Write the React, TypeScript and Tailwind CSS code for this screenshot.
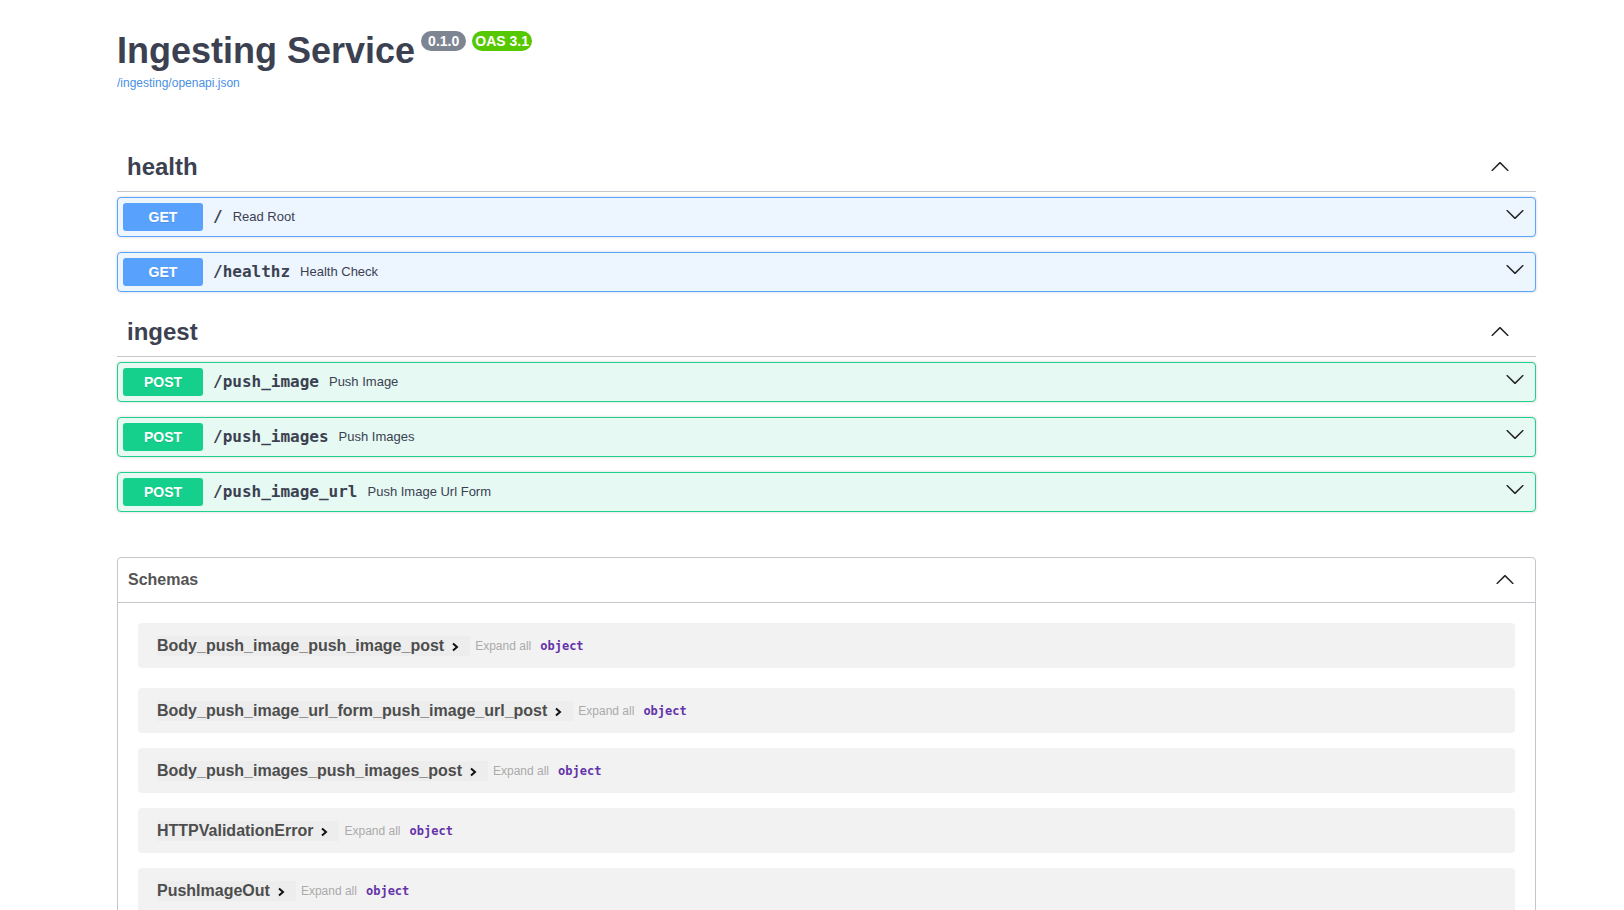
import React from 'react';

type Op = {
  method: 'GET' | 'POST';
  path: string;
  summary: string;
};

const healthOps: Op[] = [
  { method: 'GET', path: '/', summary: 'Read Root' },
  { method: 'GET', path: '/healthz', summary: 'Health Check' },
];

const ingestOps: Op[] = [
  { method: 'POST', path: '/push_image', summary: 'Push Image' },
  { method: 'POST', path: '/push_images', summary: 'Push Images' },
  { method: 'POST', path: '/push_image_url', summary: 'Push Image Url Form' },
];

const schemas = [
  'Body_push_image_push_image_post',
  'Body_push_image_url_form_push_image_url_post',
  'Body_push_images_push_images_post',
  'HTTPValidationError',
  'PushImageOut',
  'ValidationError',
];

function Arrow({ up = false, className = '' }: { up?: boolean; className?: string }) {
  return (
    <svg
      viewBox="0 0 20 20"
      width={20}
      height={20}
      fill="currentColor"
      className={(up ? 'rotate-180 ' : '') + className}
    >
      <path d="M17.418 6.109c.272-.268.709-.268.979 0s.271.701 0 .969l-7.908 7.83c-.27.268-.707.268-.979 0l-7.908-7.83c-.27-.268-.27-.701 0-.969.271-.268.709-.268.979 0L10 13.25l7.418-7.141z" />
    </svg>
  );
}

function OpBlock({ op }: { op: Op }) {
  const get = op.method === 'GET';
  return (
    <div
      className={
        get
          ? 'mb-[15px] rounded-[4px] border border-[#5aa5fd] bg-[#edf5ff] shadow-[0_0_3px_rgba(0,0,0,0.19)]'
          : 'mb-[15px] rounded-[4px] border border-[#22d08e] bg-[#e6f9f2] shadow-[0_0_3px_rgba(0,0,0,0.19)]'
      }
    >
      <div className="flex items-center p-[5px]">
        <span
          className={
            (get ? 'bg-[#58a2fd]' : 'bg-[#14d08c]') +
            ' w-[80px] rounded-[3px] py-[6px] text-center text-[14px] font-bold leading-4 text-white [text-shadow:0_1px_0_rgba(0,0,0,0.1)]'
          }
        >
          {op.method}
        </span>
        <span className="px-[10px] font-['DejaVu_Sans_Mono',monospace] text-[16px] font-bold leading-5 text-[#3b4151]">
          {op.path}
        </span>
        <span className="flex-1 text-[13px] leading-4 text-[#3b4151]">{op.summary}</span>
        <span className="mb-[6px] pl-[10px] pr-[5px] text-[#222]">
          <Arrow />
        </span>
      </div>
    </div>
  );
}

function TagSection({ name, ops }: { name: string; ops: Op[] }) {
  return (
    <div>
      <h3 className="mb-[5px] flex items-center border-b border-[#c4c6cb] py-[10px] pl-[10px] pr-[26px] text-[24px] font-bold leading-[29px] text-[#3b4151]">
        <span className="flex-1">{name}</span>
        <Arrow up className="text-[#222]" />
      </h3>
      {ops.map((op) => (
        <OpBlock key={op.path} op={op} />
      ))}
    </div>
  );
}

function SchemaRow({ name, first }: { name: string; first: boolean }) {
  return (
    <div
      className={
        (first ? 'mb-[20px]' : 'mb-[15px]') +
        ' flex h-[45px] items-center rounded-[4px] bg-[#f2f2f2] pl-[19px]'
      }
    >
      <span className="flex h-5 items-center bg-[#ededed] pr-[11px]">
        <span className="text-[16px] font-bold leading-5 text-[#4d4d4d]">{name}</span>
        <svg viewBox="0 0 8 10" width={8} height={10} className="ml-[7px] mt-[3px]">
          <path d="M2 1.5 L6 5 L2 8.5" fill="none" stroke="#111" strokeWidth={2} />
        </svg>
      </span>
      <span className="ml-[5px] text-[12px] leading-4 text-[#aaaaaa]">Expand all</span>
      <span className="ml-[9px] font-['DejaVu_Sans_Mono',monospace] text-[12px] font-bold leading-4 text-[#6432aa]">
        object
      </span>
    </div>
  );
}

export default function App() {
  return (
    <div className="min-h-screen bg-white pb-10 pl-[117px] pr-[88px] pt-[30px] font-['Liberation_Sans',Arial,sans-serif]">
      {/* Info */}
      <div className="flex items-start">
        <h2 className="text-[36px] font-bold leading-[41px] text-[#3b4151]">Ingesting Service</h2>
        <span className="ml-[6px] mt-[1px] rounded-full bg-[#7d8492] px-[7px] py-[2px] text-[14px] font-bold leading-4 text-white">
          0.1.0
        </span>
        <span className="ml-[6px] mt-[1px] rounded-full bg-[#55c800] px-[3px] py-[2px] text-[14px] font-bold leading-4 text-white">
          OAS 3.1
        </span>
      </div>
      <div className="mt-[5px] text-[12px] leading-[14px] text-[#4990e2]">/ingesting/openapi.json</div>

      {/* Operations */}
      <div className="mt-[52px]">
        <TagSection name="health" ops={healthOps} />
        <TagSection name="ingest" ops={ingestOps} />
      </div>

      {/* Schemas */}
      <section className="mt-[45px] rounded-[4px] border border-[#c4c6cb]">
        <h4 className="flex items-center border-b border-[#c4c6cb] py-[10px] pl-[10px] pr-[20px] text-[16px] font-bold leading-6 text-[#555]">
          <span className="flex-1">Schemas</span>
          <Arrow up className="text-[#222]" />
        </h4>
        <div className="px-5 pb-[5px] pt-5">
          {schemas.map((s, i) => (
            <SchemaRow key={s} name={s} first={i === 0} />
          ))}
        </div>
      </section>
    </div>
  );
}
